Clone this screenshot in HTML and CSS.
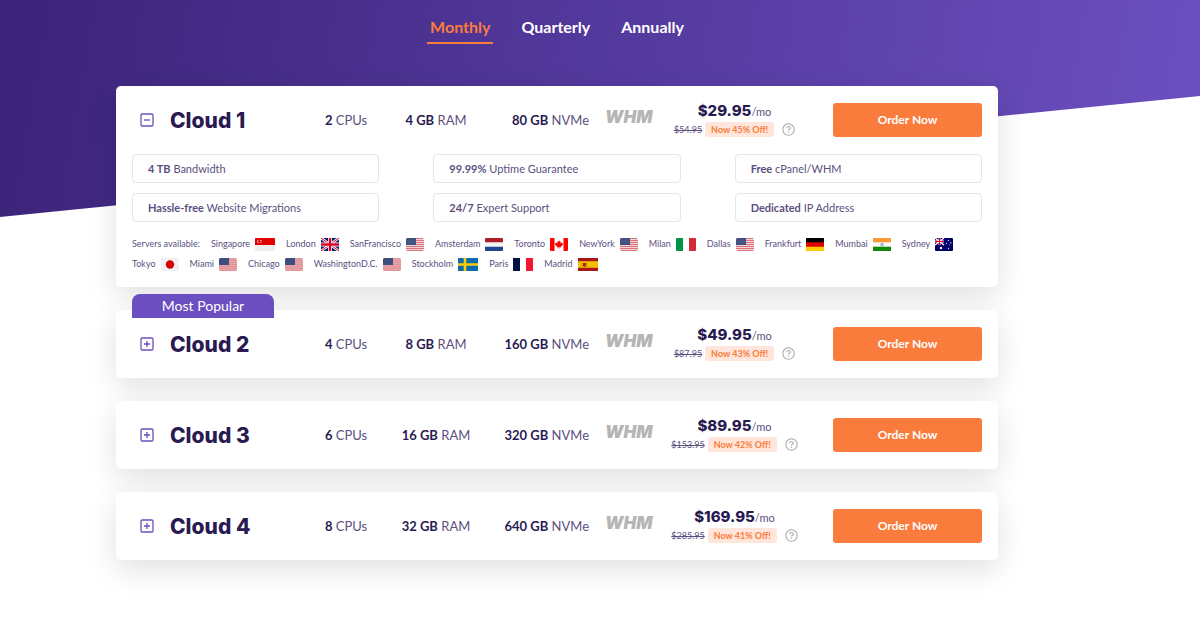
FILE: index.html
```html
<!DOCTYPE html>
<html lang="en">
<head>
    <meta charset="UTF-8">
    <title>Cloud Plans</title>
    <meta name="viewport" content="width=device-width, initial-scale=1.0">
    <link rel="stylesheet" href="styles.css">
</head>
<body>
    <!-- shared icons -->
    <svg class="sprite" aria-hidden="true">
        <symbol id="minus" viewBox="0 0 14 14">
            <rect x="1" y="1" width="12" height="12" rx="1.2" fill="none" stroke="#6b4fc0" stroke-width="1.3"/>
            <path d="M4 7h6" stroke="#6b4fc0" stroke-width="1.3"/>
        </symbol>
        <symbol id="plus" viewBox="0 0 14 14">
            <rect x="1" y="1" width="12" height="12" rx="1.2" fill="none" stroke="#6b4fc0" stroke-width="1.3"/>
            <path d="M4 7h6M7 4v6" stroke="#6b4fc0" stroke-width="1.3"/>
        </symbol>
        <symbol id="help" viewBox="0 0 13 13">
            <circle cx="6.5" cy="6.5" r="5.7" fill="none" stroke="#aaa" stroke-width="1.1"/>
            <path d="M4.8 5.2c0-1 .7-1.7 1.7-1.7s1.8.6 1.8 1.5c0 1.3-1.8 1.2-1.8 2.5" fill="none" stroke="#aaa" stroke-width="1.1"/>
            <circle cx="6.5" cy="9.2" r=".7" fill="#aaa"/>
        </symbol>
        <symbol id="us" viewBox="0 0 18 13">
            <rect width="18" height="13" rx="1.5" fill="#f3d3d6"/>
            <path d="M1 .5h16M0 2.5h18M0 4.5h18M0 6.5h18M0 8.5h18M0 10.5h18M1 12.5h16" stroke="#d9727b"/>
            <path d="M1.5 0H10v7H0V1.5A1.5 1.5 0 0 1 1.5 0z" fill="#3d4f7c"/>
            <path d="M1 2h8M2 3.5h7M1 5h8" stroke="#71809f" stroke-width=".6" stroke-dasharray=".6 1"/>
        </symbol>
        <symbol id="us-soft" viewBox="0 0 18 13">
            <rect width="18" height="13" rx="1.5" fill="#e8a5a9"/>
            <path d="M1 .5h16M0 2.5h18M0 4.5h18M0 6.5h18M0 8.5h18M0 10.5h18M1 12.5h16" stroke="#df9298"/>
            <path d="M1.5 0H10v7H0V1.5A1.5 1.5 0 0 1 1.5 0z" fill="#3d4f7c"/>
        </symbol>
    </svg>

    <main class="page">
        <nav class="billing">
            <button type="button" class="active">Monthly</button>
            <button type="button">Quarterly</button>
            <button type="button">Annually</button>
        </nav>

        <section class="plan">
            <div class="plan-row">
                <button type="button" class="toggle" aria-label="Hide details"><svg><use href="#minus"/></svg></button>
                <h2>Cloud 1</h2>
                <span class="spec"><b>2</b> CPUs</span>
                <span class="spec"><b>4 GB</b> RAM</span>
                <span class="spec disk"><b>80 GB</b> NVMe</span>
                <span class="whm">WHM</span>
                <div class="price">
                    <div class="now"><strong>$29.95</strong>/mo</div>
                    <div class="deal"><del>$54.95</del><span class="off">Now 45% Off!</span><button type="button" class="help" aria-label="Price details"><svg><use href="#help"/></svg></button></div>
                </div>
                <a href="#" class="order">Order Now</a>
            </div>
            <ul class="features">
                <li><b>4 TB</b> Bandwidth</li>
                <li><b>99.99%</b> Uptime Guarantee</li>
                <li><b>Free</b> cPanel/WHM</li>
                <li><b>Hassle-free</b> Website Migrations</li>
                <li><b>24/7</b> Expert Support</li>
                <li><b>Dedicated</b> IP Address</li>
            </ul>
            <div class="servers">
                <span>Servers available:</span>
                <span>Singapore <svg class="wide" viewBox="0 0 20 13">
                    <rect width="20" height="13" rx="1" fill="#eee"/><path d="M1 0h18a1 1 0 0 1 1 1v6H0V1a1 1 0 0 1 1-1z" fill="#df0000"/>
                    <path d="M4.2 1.5a2 2 0 1 0 0 4 2.3 2.3 0 0 1 0-4z" fill="#fff"/><path d="M5 2.5h2M4.8 4.3h2.4" stroke="#fff" stroke-width=".8" stroke-dasharray=".8 .5"/>
                </svg></span>
                <span>London <svg viewBox="0 0 18 13">
                    <rect width="18" height="13" rx="1" fill="#001b69"/><path d="M0 0l18 13M18 0L0 13" stroke="#fff" stroke-width="2.6"/>
                    <path d="M0 0l18 13M18 0L0 13" stroke="#d80027" stroke-width="1"/><path d="M9 0v13M0 6.5h18" stroke="#fff" stroke-width="4"/><path d="M9 0v13M0 6.5h18" stroke="#d80027" stroke-width="2.4"/>
                </svg></span>
                <span>SanFrancisco <svg><use href="#us"/></svg></span>
                <span>Amsterdam <svg viewBox="0 0 18 13">
                    <rect width="18" height="13" rx="1" fill="#f3f3f3"/><path d="M1 0h16a1 1 0 0 1 1 1v3.3H0V1a1 1 0 0 1 1-1z" fill="#ae1c28"/><path d="M0 8.7h18V12a1 1 0 0 1-1 1H1a1 1 0 0 1-1-1z" fill="#21468b"/>
                </svg></span>
                <span>Toronto <svg viewBox="0 0 18 13">
                    <rect width="18" height="13" rx="1" fill="#fff"/><path d="M1 0h3.5v13H1a1 1 0 0 1-1-1V1a1 1 0 0 1 1-1zM13.5 0H17a1 1 0 0 1 1 1v11a1 1 0 0 1-1 1h-3.5z" fill="#f00"/>
                    <path d="M9 2.3l.9 1.5.9-.4-.3 2 1.1-.9.3.8 1.2-.2-.5 1.3.5.4-2.3 1.9.2.7-1.8-.2v1.7h-.4V9.2l-1.8.2.2-.7-2.3-1.9.5-.4-.5-1.3 1.2.2.3-.8 1.1.9-.3-2 .9.4z" fill="#f00"/>
                </svg></span>
                <span>NewYork <svg><use href="#us"/></svg></span>
                <span>Milan <svg class="wide" viewBox="0 0 20 13">
                    <path d="M1 0h6v13H1a1 1 0 0 1-1-1V1a1 1 0 0 1 1-1z" fill="#009246"/><path d="M13 0h6a1 1 0 0 1 1 1v11a1 1 0 0 1-1 1h-6z" fill="#d52b37"/>
                </svg></span>
                <span>Dallas <svg><use href="#us"/></svg></span>
                <span>Frankfurt <svg viewBox="0 0 18 13">
                    <rect width="18" height="13" rx="1" fill="#d00"/><path d="M1 0h16a1 1 0 0 1 1 1v3.3H0V1a1 1 0 0 1 1-1z" fill="#000"/><path d="M0 8.7h18V12a1 1 0 0 1-1 1H1a1 1 0 0 1-1-1z" fill="#ffce00"/>
                </svg></span>
                <span>Mumbai <svg viewBox="0 0 18 13">
                    <rect width="18" height="13" rx="1" fill="#fafafa"/><path d="M0 0h18v4.3H0z" fill="#f93"/><path d="M0 8.7h18V13H0z" fill="#128807"/><circle cx="9" cy="6.5" r="1.5" fill="#bcbce0" stroke="#8888c0" stroke-width=".4"/>
                </svg></span>
                <span>Sydney <svg viewBox="0 0 18 13">
                    <rect width="18" height="13" rx="1" fill="#00006c"/><path d="M0 0l9 7M9 0L0 7" stroke="#fff" stroke-width="1.3"/><path d="M4.5 0v7M0 3.5h9" stroke="#fff" stroke-width="2"/><path d="M4.5 0v7M0 3.5h9" stroke="#e4002b" stroke-width="1.2"/>
                    <circle cx="6" cy="10" r="1.2" fill="#fff"/><g fill="#d5d5ec"><circle cx="13.5" cy="2.5" r=".7"/><circle cx="11.5" cy="5.5" r=".7"/><circle cx="15.8" cy="4.8" r=".7"/><circle cx="14.5" cy="7" r=".4"/><circle cx="13.5" cy="10.5" r=".7"/></g>
                </svg></span>
                <span>Tokyo <svg viewBox="0 0 18 13">
                    <rect width="18" height="13" rx="1" fill="#f1f1f1"/><circle cx="9" cy="6.5" r="4.2" fill="#d80000"/>
                </svg></span>
                <span>Miami <svg><use href="#us-soft"/></svg></span>
                <span>Chicago <svg><use href="#us-soft"/></svg></span>
                <span>WashingtonD.C. <svg><use href="#us-soft"/></svg></span>
                <span>Stockholm <svg class="wide" viewBox="0 0 20 13">
                    <rect width="20" height="13" fill="#0b6bad"/><path d="M7 0v13M0 6.5h20" stroke="#fecc00" stroke-width="2.6"/>
                </svg></span>
                <span>Paris <svg class="wide" viewBox="0 0 20 13">
                    <rect width="7" height="13" fill="#000f45"/><rect x="13" width="7" height="13" fill="#f31830"/>
                </svg></span>
                <span>Madrid <svg class="wide" viewBox="0 0 20 13">
                    <rect width="20" height="13" fill="#aa151b"/><path d="M0 3.2h20v6.6H0z" fill="#f1bf00"/><path d="M5 5h3v3l-1.5 1L5 8z" fill="#ad2a1a"/><path d="M4 5v4M9 5v4" stroke="#b87918" stroke-width=".7"/>
                </svg></span>
            </div>
        </section>

        <section class="plan">
            <span class="popular">Most Popular</span>
            <div class="plan-row">
                <button type="button" class="toggle" aria-label="Show details"><svg><use href="#plus"/></svg></button>
                <h2>Cloud 2</h2>
                <span class="spec"><b>4</b> CPUs</span>
                <span class="spec"><b>8 GB</b> RAM</span>
                <span class="spec disk"><b>160 GB</b> NVMe</span>
                <span class="whm">WHM</span>
                <div class="price">
                    <div class="now"><strong>$49.95</strong>/mo</div>
                    <div class="deal"><del>$87.95</del><span class="off">Now 43% Off!</span><button type="button" class="help" aria-label="Price details"><svg><use href="#help"/></svg></button></div>
                </div>
                <a href="#" class="order">Order Now</a>
            </div>
        </section>

        <section class="plan">
            <div class="plan-row">
                <button type="button" class="toggle" aria-label="Show details"><svg><use href="#plus"/></svg></button>
                <h2>Cloud 3</h2>
                <span class="spec"><b>6</b> CPUs</span>
                <span class="spec"><b>16 GB</b> RAM</span>
                <span class="spec disk"><b>320 GB</b> NVMe</span>
                <span class="whm">WHM</span>
                <div class="price">
                    <div class="now"><strong>$89.95</strong>/mo</div>
                    <div class="deal"><del>$153.95</del><span class="off">Now 42% Off!</span><button type="button" class="help" aria-label="Price details"><svg><use href="#help"/></svg></button></div>
                </div>
                <a href="#" class="order">Order Now</a>
            </div>
        </section>

        <section class="plan">
            <div class="plan-row">
                <button type="button" class="toggle" aria-label="Show details"><svg><use href="#plus"/></svg></button>
                <h2>Cloud 4</h2>
                <span class="spec"><b>8</b> CPUs</span>
                <span class="spec"><b>32 GB</b> RAM</span>
                <span class="spec disk"><b>640 GB</b> NVMe</span>
                <span class="whm">WHM</span>
                <div class="price">
                    <div class="now"><strong>$169.95</strong>/mo</div>
                    <div class="deal"><del>$285.95</del><span class="off">Now 41% Off!</span><button type="button" class="help" aria-label="Price details"><svg><use href="#help"/></svg></button></div>
                </div>
                <a href="#" class="order">Order Now</a>
            </div>
        </section>
    </main>
</body>
</html>
```

FILE: styles.css
```css
* {
    box-sizing: border-box;
}
body {
    margin: 0;
    font-family: Lato, "Open Sans", sans-serif;
    color: #5b4f80;
    background: #fff;
}
body::before {
    content: '';
    position: absolute;
    z-index: -1;
    top: 0;
    left: 0;
    width: 100%;
    height: 217px;
    background: linear-gradient(100deg, #3b2379, #6c50c1);
    clip-path: polygon(0 0, 100% 0, 100% 96px, 0 100%);
}
button {
    padding: 0;
    border: 0;
    background: none;
    font-family: inherit;
    cursor: pointer;
}
.sprite {
    display: none;
}
.page {
    padding: 15px 202px 48px 116px;
}
.billing {
    display: flex;
    justify-content: center;
    gap: 25px;
    margin-bottom: 42px;
}
.billing button {
    height: 29px;
    padding: 0 3px 5px;
    border-bottom: 2px solid transparent;
    color: #fff;
    font-size: 16px;
    font-weight: bold;
}
.billing .active {
    color: #f97c3c;
    border-color: #f97c3c;
}
.plan {
    position: relative;
    margin-bottom: 23px;
    padding: 0 16px;
    background: #fff;
    border-radius: 5px;
    box-shadow: 0 10px 30px rgba(0, 0, 0, 0.12);
}
.plan-row {
    display: grid;
    grid-template-columns: 38px minmax(122px, 1fr) 94px 86px 110px 64px 163px 17px 149px;
    align-items: center;
    height: 68px;
}
.toggle {
    width: 14px;
    height: 14px;
    margin-left: 8px;
}
.toggle svg,
.help svg {
    display: block;
    width: 100%;
    height: 100%;
}
h2 {
    margin: 0;
    color: #291b52;
    font-family: Inter, sans-serif;
    font-size: 21px;
    font-weight: 800;
}
.spec {
    font-size: 13px;
    text-align: center;
    white-space: nowrap;
}
.spec b {
    color: #291b52;
}
.disk {
    text-align: right;
}
.whm {
    padding: 0 0 6px 16px;
    color: #b5b5b5;
    font: italic 900 17px Inter, sans-serif;
}
.price {
    padding-bottom: 2px;
    text-align: center;
}
.now {
    font-size: 11px;
    line-height: 20px;
}
.now strong {
    color: #291b52;
    font-family: Inter, sans-serif;
    font-size: 15px;
    font-weight: 800;
}
.deal {
    display: flex;
    justify-content: center;
    align-items: center;
    font-size: 9px;
}
.off {
    margin: 0 8px 0 3px;
    padding: 0 6px;
    border-radius: 3px;
    background: #ffe5da;
    color: #f97c3c;
    font-weight: bold;
    line-height: 15px;
}
.help {
    width: 13px;
    height: 13px;
}
.order {
    grid-column: 9;
    border-radius: 3px;
    background: #f97c3c;
    color: #fff;
    font-size: 12px;
    font-weight: bold;
    line-height: 34px;
    text-align: center;
    text-decoration: none;
}
.features {
    display: grid;
    grid-template-columns: repeat(3, 1fr);
    gap: 10px 54px;
    margin: 0;
    padding: 0;
    list-style: none;
    font-size: 11px;
    line-height: 27px;
}
.features li {
    padding-left: 15px;
    border: 1px solid #e6e6e8;
    border-radius: 4px;
}
.servers {
    display: flex;
    flex-wrap: wrap;
    column-gap: 11px;
    padding: 12px 0 13px;
    font-size: 9px;
    line-height: 20px;
}
.servers span {
    display: flex;
    align-items: center;
    gap: 5px;
}
.servers svg {
    width: 18px;
    height: 13px;
}
.servers .wide {
    width: 20px;
}
.popular {
    position: absolute;
    top: -16px;
    left: 16px;
    width: 142px;
    border-radius: 8px 8px 0 0;
    background: #6b4fc0;
    color: #fff;
    font-size: 14px;
    line-height: 24px;
    text-align: center;
}
```
